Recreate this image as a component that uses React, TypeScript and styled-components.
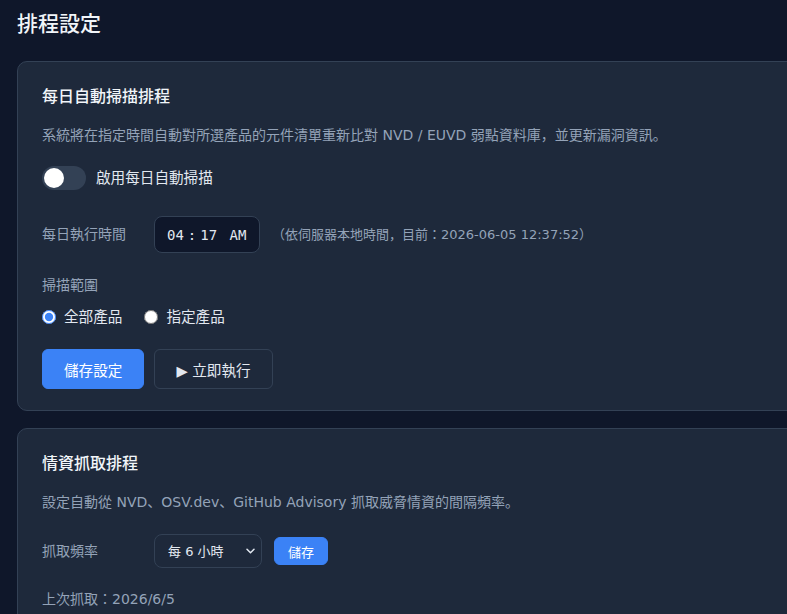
import React, { useState } from "react";
import styled, { createGlobalStyle } from "styled-components";

const GlobalStyle = createGlobalStyle`
  html, body {
    margin: 0;
    padding: 0;
    background: #0f172a;
    overflow: hidden;
  }
  body {
    font-family: "DejaVu Sans", "Noto Sans CJK JP", sans-serif;
    color: #e2e8f0;
  }
  * { box-sizing: border-box; }
`;

const Page = styled.div`
  padding: 8px 17px 40px;
  width: 880px;
`;

const PageTitle = styled.h1`
  margin: 0 0 21px;
  font-size: 21px;
  line-height: 32px;
  font-weight: 500;
  color: #f1f5f9;
`;

const Card = styled.section`
  background: #1e293b;
  border: 1px solid #334155;
  border-radius: 10px;
  padding: 23px 24px 21px;
  margin-bottom: 17px;
  display: flex;
  flex-direction: column;
  align-items: flex-start;
`;

const CardTitle = styled.h2`
  margin: 0 0 16px;
  font-size: 16px;
  line-height: 24px;
  font-weight: 500;
  color: #f1f5f9;
`;

const Desc = styled.p<{ $mb?: number }>`
  margin: 0 0 ${(p) => p.$mb ?? 20}px;
  font-size: 14px;
  line-height: 21px;
  color: #94a3b8;
`;

const Row = styled.div<{ $mb?: number }>`
  display: flex;
  align-items: center;
  gap: 12px;
  margin-bottom: ${(p) => p.$mb ?? 0}px;
`;

const ToggleRow = styled.label<{ $mb?: number }>`
  display: flex;
  align-items: center;
  gap: 10px;
  font-size: 14.6px;
  line-height: 24px;
  color: #e2e8f0;
  cursor: pointer;
  margin-bottom: ${(p) => p.$mb ?? 0}px;
`;

const Track = styled.span<{ $on: boolean }>`
  position: relative;
  width: 44px;
  height: 24px;
  border-radius: 12px;
  background: ${(p) => (p.$on ? "#3b82f6" : "#334155")};
  flex: none;
`;

const Knob = styled.span<{ $on: boolean }>`
  position: absolute;
  top: 2px;
  left: ${(p) => (p.$on ? "22px" : "2px")};
  width: 20px;
  height: 20px;
  border-radius: 50%;
  background: #ffffff;
`;

const FieldLabel = styled.span`
  width: 100px;
  flex: none;
  font-size: 14px;
  line-height: 21px;
  color: #94a3b8;
`;

const TimeInput = styled.input`
  width: 106px;
  height: 37px;
  padding: 0 0 0 8px;
  background: #0f172a;
  border: 1px solid #334155;
  border-radius: 8px;
  color: #e2e8f0;
  font-family: "DejaVu Sans Mono", monospace;
  font-size: 14px;
  color-scheme: dark;
  &::-webkit-calendar-picker-indicator {
    display: none;
  }
  &::-webkit-datetime-edit-hour-field,
  &::-webkit-datetime-edit-minute-field {
    padding: 0 4px;
  }
  &::-webkit-datetime-edit-ampm-field {
    padding: 0;
  }
`;

const Hint = styled.span`
  font-size: 13px;
  line-height: 20px;
  color: #94a3b8;
`;

const SubLabel = styled.div<{ $mb?: number }>`
  font-size: 14px;
  line-height: 21px;
  color: #94a3b8;
  margin-bottom: ${(p) => p.$mb ?? 0}px;
`;

const RadioGroup = styled.div<{ $mb?: number }>`
  display: flex;
  align-items: center;
  gap: 22px;
  height: 22px;
  margin-bottom: ${(p) => p.$mb ?? 0}px;
`;

const RadioLabel = styled.label`
  display: flex;
  align-items: center;
  gap: 8px;
  font-size: 14.6px;
  line-height: 22px;
  color: #e2e8f0;
  cursor: pointer;
`;

const Radio = styled.input`
  margin: 0;
  width: 14px;
  height: 14px;
  accent-color: #3b82f6;
`;

const Buttons = styled.div`
  display: flex;
  gap: 10px;
`;

const Button = styled.button<{ $variant?: "primary" | "ghost"; $size?: "md" | "sm" }>`
  height: ${(p) => (p.$size === "sm" ? "28px" : "40px")};
  padding: ${(p) => (p.$size === "sm" ? "0 13px" : "0 21px")};
  border-radius: 6px;
  font-family: inherit;
  font-size: ${(p) => (p.$size === "sm" ? "13px" : "14.6px")};
  cursor: pointer;
  color: ${(p) => (p.$variant === "ghost" ? "#e2e8f0" : "#ffffff")};
  background: ${(p) => (p.$variant === "ghost" ? "transparent" : "#3b82f6")};
  border: 1px solid ${(p) => (p.$variant === "ghost" ? "#334155" : "#3b82f6")};
`;

const SelectWrap = styled.div`
  position: relative;
  display: inline-flex;
`;

const Select = styled.select`
  appearance: none;
  -webkit-appearance: none;
  width: 108px;
  height: 34px;
  padding: 0 28px 0 13px;
  background: #1e293b;
  border: 1px solid #334155;
  border-radius: 8px;
  color: #e2e8f0;
  font-family: inherit;
  font-size: 13px;
`;

const Chevron = styled.svg`
  position: absolute;
  right: 7px;
  top: 14px;
  width: 9px;
  height: 6px;
  pointer-events: none;
`;

const Meta = styled.div`
  font-size: 14px;
  line-height: 21px;
  color: #94a3b8;
`;

export default function App() {
  const [enabled, setEnabled] = useState(false);
  const [scope, setScope] = useState("all");
  const [freq, setFreq] = useState("6");

  return (
    <>
      <GlobalStyle />
      <Page>
        <PageTitle>排程設定</PageTitle>

        <Card>
          <CardTitle>每日自動掃描排程</CardTitle>
          <Desc>
            系統將在指定時間自動對所選產品的元件清單重新比對 NVD / EUVD 弱點資料庫，並更新漏洞資訊。
          </Desc>
          <ToggleRow $mb={26} onClick={() => setEnabled(!enabled)}>
            <Track $on={enabled}>
              <Knob $on={enabled} />
            </Track>
            啟用每日自動掃描
          </ToggleRow>
          <Row $mb={22}>
            <FieldLabel>每日執行時間</FieldLabel>
            <TimeInput type="time" defaultValue="04:17" />
            <Hint>（依伺服器本地時間，目前：2026-06-05 12:37:52）</Hint>
          </Row>
          <SubLabel $mb={10}>掃描範圍</SubLabel>
          <RadioGroup $mb={21}>
            <RadioLabel>
              <Radio type="radio" name="scope" checked={scope === "all"} onChange={() => setScope("all")} />
              全部產品
            </RadioLabel>
            <RadioLabel>
              <Radio type="radio" name="scope" checked={scope === "some"} onChange={() => setScope("some")} />
              指定產品
            </RadioLabel>
          </RadioGroup>
          <Buttons>
            <Button $variant="primary">儲存設定</Button>
            <Button $variant="ghost">▶ 立即執行</Button>
          </Buttons>
        </Card>

        <Card>
          <CardTitle>情資抓取排程</CardTitle>
          <Desc $mb={21}>
            設定自動從 NVD、OSV.dev、GitHub Advisory 抓取威脅情資的間隔頻率。
          </Desc>
          <Row $mb={21}>
            <FieldLabel>抓取頻率</FieldLabel>
            <SelectWrap>
              <Select value={freq} onChange={(e) => setFreq(e.target.value)}>
                <option value="1">每 1 小時</option>
                <option value="3">每 3 小時</option>
                <option value="6">每 6 小時</option>
                <option value="12">每 12 小時</option>
                <option value="24">每 24 小時</option>
              </Select>
              <Chevron viewBox="0 0 9 6">
                <path d="M1 1.2l3.5 3.5 3.5-3.5" fill="none" stroke="#e2e8f0" strokeWidth="1.5" strokeLinecap="round" strokeLinejoin="round" />
              </Chevron>
            </SelectWrap>
            <Button $variant="primary" $size="sm">儲存</Button>
          </Row>
          <Meta>上次抓取：2026/6/5</Meta>
        </Card>
      </Page>
    </>
  );
}
